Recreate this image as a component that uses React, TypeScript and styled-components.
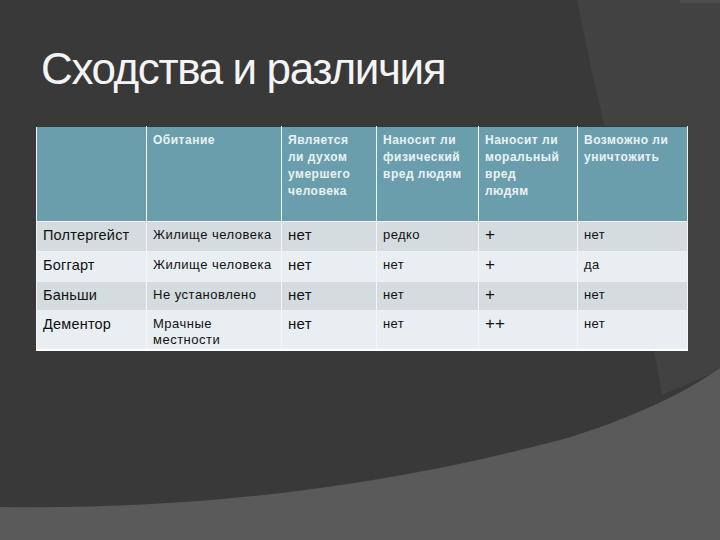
import React from 'react';
import styled, { createGlobalStyle } from 'styled-components';

const GlobalStyle = createGlobalStyle`
  html, body {
    margin: 0;
    padding: 0;
    background: #393939;
  }
`;

const Slide = styled.div`
  position: relative;
  width: 720px;
  height: 540px;
  overflow: hidden;
  background: #393939;
  font-family: "Liberation Sans", Arial, sans-serif;
`;

const Backdrop = styled.svg`
  position: absolute;
  inset: 0;
  z-index: 0;
`;

const Content = styled.div`
  position: relative;
  z-index: 1;
  display: flex;
  flex-direction: column;
  padding: 43px 34px 0 36px;
`;

const Title = styled.h1`
  margin: 0 0 0 5px;
  font-weight: normal;
  font-size: 44px;
  line-height: 52px;
  color: #f4f4f4;
  letter-spacing: -1.4px;
`;

const Table = styled.table`
  margin-top: 31px;
  width: 651px;
  border-collapse: collapse;
  table-layout: fixed;
  border-top: 1px solid #2e3c3e;
  border-bottom: 2px solid #ffffff;
  border-left: 1px solid #f2f5f7;
  border-right: 1px solid #f2f5f7;
`;

const HeadCell = styled.th`
  background: #6b9ead;
  color: #eaf2f4;
  font-size: 12px;
  font-weight: bold;
  line-height: 17px;
  letter-spacing: 0.5px;
  text-align: left;
  vertical-align: top;
  padding: 5px 4px 0 6px;
  height: 89px;
  border-left: 1px solid #f3f6f8;
  white-space: nowrap;
  &:first-child {
    border-left: none;
  }
`;

const Row = styled.tr<{ $shade: boolean }>`
  background: ${p => (p.$shade ? '#d5dce0' : '#e9eef2')};
`;

const Cell = styled.td<{ $size: number; $spacing: number; $h: number }>`
  color: #111;
  font-size: ${p => p.$size}px;
  letter-spacing: ${p => p.$spacing}px;
  line-height: 16px;
  vertical-align: top;
  padding: 5px 4px 0 6px;
  height: ${p => p.$h}px;
  border-left: 1px solid #f3f6f8;
  border-top: 1px solid #eef2f5;
  overflow: hidden;
  white-space: nowrap;
  &:first-child {
    border-left: none;
  }
`;

const widths = [110, 135, 95, 102, 99, 110];

const headers: string[][] = [
  [],
  ['Обитание'],
  ['Является', 'ли духом', 'умершего', 'человека'],
  ['Наносит ли', 'физический', 'вред людям'],
  ['Наносит ли', 'моральный', 'вред', 'людям'],
  ['Возможно ли', 'уничтожить'],
];

const rows = [
  { h: 24, cells: [['Полтергейст'], ['Жилище человека'], ['нет'], ['редко'], ['+'], ['нет']] },
  { h: 24, cells: [['Боггарт'], ['Жилище человека'], ['нет'], ['нет'], ['+'], ['да']] },
  { h: 23, cells: [['Баньши'], ['Не установлено'], ['нет'], ['нет'], ['+'], ['нет']] },
  { h: 33, cells: [['Дементор'], ['Мрачные', 'местности'], ['нет'], ['нет'], ['++'], ['нет']] },
];

const sizes = [14.5, 13, 15, 13, 17, 13];
const spacings = [0.2, 0.5, 0.3, 0.4, 0, 0.4];

const lines = (parts: string[]) =>
  parts.map((p, i) => (
    <React.Fragment key={i}>
      {i > 0 && <br />}
      {p}
    </React.Fragment>
  ));

const App: React.FC = () => {
  return (
    <>
      <GlobalStyle />
      <Slide>
        <Backdrop width="720" height="540" viewBox="0 0 720 540">
          <path d="M577 0 C600 120 640 260 662 395 L720 370 L720 0 Z" fill="#424242" />
          <path d="M680 0 L720 0 L720 3 L680 3 Z" fill="#4c4c4c" />
          <path d="M0 507 C220 510 400 482 560 440 C630 420 690 390 720 368 L720 540 L0 540 Z" fill="#5a5a5a" />
        </Backdrop>
        <Content>
          <Title>Сходства и различия</Title>
          <Table>
            <colgroup>
              {widths.map((w, i) => (
                <col key={i} style={{ width: w }} />
              ))}
            </colgroup>
            <thead>
              <tr>
                {headers.map((h, i) => (
                  <HeadCell key={i}>{lines(h)}</HeadCell>
                ))}
              </tr>
            </thead>
            <tbody>
              {rows.map((r, ri) => (
                <Row key={ri} $shade={ri % 2 === 0}>
                  {r.cells.map((c, ci) => (
                    <Cell key={ci} $size={sizes[ci]} $spacing={spacings[ci]} $h={r.h}>
                      {lines(c)}
                    </Cell>
                  ))}
                </Row>
              ))}
            </tbody>
          </Table>
        </Content>
      </Slide>
    </>
  );
};

export default App;
